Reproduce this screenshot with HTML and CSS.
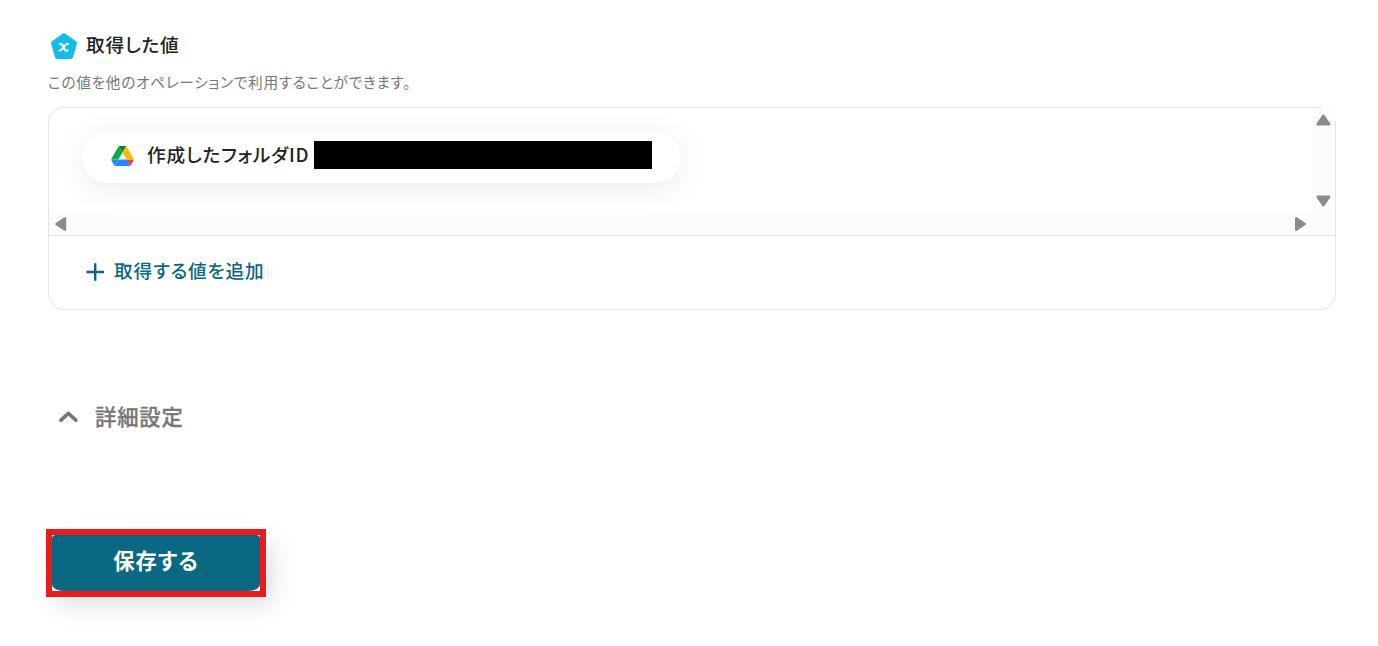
FILE: index.html
```html
<!DOCTYPE html>
<html lang="ja">
<head>
<meta charset="utf-8">
<title>取得した値</title>
<link rel="stylesheet" href="styles.css">
</head>
<body>
<main class="page">
  <header class="heading">
    <svg class="heading-icon" viewBox="0 0 28 28" aria-hidden="true">
      <path d="M14 3.6 L24.7 11.2 L20.8 24.6 H7.2 L3.3 11.2 Z" fill="#13bcee" stroke="#13bcee" stroke-width="4.6" stroke-linejoin="round"/>
      <path d="M9.7 11.8 C11.8 11.2 12.4 12.6 13.6 15.2 C14.7 18.1 15.5 19.4 17.8 18.4 M18.1 11.8 C15.8 11.6 15 13.6 13.6 15.2 C12.3 17 11.6 18.9 9.2 18.6" fill="none" stroke="#fff" stroke-width="1.9" stroke-linecap="round"/>
    </svg>
    <h2 class="heading-title">取得した値</h2>
  </header>
  <p class="description">この値を他のオペレーションで利用することができます。</p>
  <section class="card">
    <div class="values">
      <div class="values-view">
        <div class="chip">
          <svg class="chip-icon" viewBox="0 0 87.3 78" aria-hidden="true">
            <path d="m6.6 66.85 3.85 6.65c.8 1.4 1.95 2.5 3.3 3.3L27.5 53H0c0 1.55.4 3.1 1.2 4.5z" fill="#2684fc"/>
            <path d="M43.65 25 29.9 1.2c-1.35.8-2.5 1.9-3.3 3.3L1.2 48.5A9 9 0 0 0 0 53h27.5z" fill="#00ac47"/>
            <path d="M73.55 76.8c1.35-.8 2.5-1.9 3.3-3.3L86.1 57.5c.8-1.4 1.2-2.95 1.2-4.5H59.8l5.85 11.5z" fill="#ea4335"/>
            <path d="M43.65 25 57.4 1.2C56.05.4 54.5 0 52.9 0H34.4c-1.6 0-3.15.45-4.5 1.2z" fill="#00832d"/>
            <path d="M59.8 53H27.5L13.75 76.8c1.35.8 2.9 1.2 4.5 1.2h50.8c1.6 0 3.15-.45 4.5-1.2z" fill="#2684fc"/>
            <path d="M73.4 26.5 60.7 4.5c-.8-1.4-1.95-2.5-3.3-3.3L43.65 25 59.8 53h27.45c0-1.55-.4-3.1-1.2-4.5z" fill="#ffba00"/>
          </svg>
          <span class="chip-label">作成したフォルダID</span>
          <span class="chip-mask"></span>
        </div>
      </div>
      <div class="bar bar-vertical">
        <svg class="arrow" viewBox="0 0 16 16"><path d="M8.4 3.7 L14.2 12.2 H2.6 Z"/></svg>
        <svg class="arrow" viewBox="0 0 16 16"><path d="M8.4 12.3 L14.2 3.8 H2.6 Z"/></svg>
      </div>
      <div class="bar bar-horizontal">
        <svg class="arrow" viewBox="0 0 16 16"><path d="M3.5 8 L12 2.2 V13.8 Z"/></svg>
        <svg class="arrow" viewBox="0 0 16 16"><path d="M12.7 8 L4.2 2.2 V13.8 Z"/></svg>
      </div>
      <div class="bar"></div>
    </div>
    <div class="add">
      <svg class="add-icon" viewBox="0 0 20 20" aria-hidden="true"><path d="M10.2 1.2V18.8M1.4 10H19"/></svg>
      <span class="add-label">取得する値を追加</span>
    </div>
  </section>
  <div class="advanced">
    <svg class="advanced-icon" viewBox="0 0 20 14" aria-hidden="true"><path d="M3 10.2 L10.4 3.4 L17.8 10.2"/></svg>
    <span class="advanced-label">詳細設定</span>
  </div>
  <div class="save-frame"><button class="save" type="button">保存する</button></div>
</main>
</body>
</html>
```
FILE: styles.css
```css
* { box-sizing: border-box; }
body {
  margin: 0;
  background: #fff;
  color: #222;
  font-family: "Noto Sans CJK JP", sans-serif;
  font-feature-settings: "palt";
  letter-spacing: .05em;
}
.page { padding: 32px 42px 0 48px; height: 646px; overflow: hidden; }
.heading { display: flex; align-items: flex-start; height: 28px; }
.heading-icon { width: 28px; height: 28px; margin: 0 8px 0 2px; }
.heading-title { margin: -2px 0 0; font-size: 18.67px; font-weight: 500; line-height: 28px; }
.description { margin: 11px 0 0; height: 36px; font-size: 14.67px; line-height: 22px; letter-spacing: .7px; color: #777; }
.card { height: 203px; border: 1px solid #e4e4e4; border-radius: 16px; }
.values {
  display: grid;
  grid-template: 104px 23px / 1fr 23px;
  height: 128px;
  border-bottom: 1px solid #e4e4e4;
}
.values-view { overflow: hidden; padding: 23px 0 0 33px; border-top-left-radius: 15px; }
.chip {
  display: flex;
  align-items: center;
  width: 599px;
  height: 52px;
  padding-left: 29px;
  border-radius: 26px;
  background: #fff;
  box-shadow: 0 6px 32px rgba(0, 0, 0, .08), 0 0 2px rgba(0, 0, 0, .04);
}
.chip-icon { width: 23px; height: 20px; margin: 0 13px 2px 0; }
.chip-label { width: 167px; margin-top: -6px; font-size: 18.67px; font-weight: 500; line-height: 28px; white-space: nowrap; }
.chip-mask { width: 338px; height: 28px; margin-top: -4px; background: #000; }
.bar { display: flex; justify-content: space-between; background: #fcfcfc; }
.bar-vertical { flex-direction: column; align-items: flex-start; padding: 4px 0 3px 3px; }
.bar-horizontal { align-items: center; padding: 1px 4px 0; }
.arrow { width: 16px; height: 16px; fill: #8b8b8b; stroke: #8b8b8b; stroke-width: 2.4; stroke-linejoin: round; }
.add { display: flex; align-items: center; height: 71px; padding-left: 36px; color: #0b6882; }
.add-icon { width: 20px; height: 20px; margin-right: 9px; fill: none; stroke: currentColor; stroke-width: 2.4; }
.add-label { margin-top: -3px; font-size: 18.67px; font-weight: 500; line-height: 28px; }
.advanced { display: flex; align-items: center; height: 32px; margin-top: 91px; padding-left: 10px; color: #777; }
.advanced-icon { width: 20px; height: 14px; margin: 0 17px 1px 0; fill: none; stroke: currentColor; stroke-width: 3.6; stroke-linecap: round; stroke-linejoin: round; }
.advanced-label { margin-top: -2px; font-size: 21.33px; font-weight: 500; line-height: 32px; -webkit-text-stroke: .3px currentColor; }
.save-frame {
  width: 220px;
  height: 68px;
  margin: 96px 0 0 -2px;
  border: 6px solid #e81c1c;
  background: #e8edef;
  box-shadow: 8px 10px 26px -4px rgba(20, 50, 65, .18);
}
.save {
  display: block;
  width: 208px;
  height: 56px;
  padding: 0 0 7px;
  border: 0;
  border-radius: 4px 4px 12px 12px / 4px 4px 7px 7px;
  background: #0b6882;
  color: #fff;
  font: 700 21.33px "Noto Sans CJK JP", sans-serif;
  letter-spacing: .05em;
  font-feature-settings: "palt";
}
```
